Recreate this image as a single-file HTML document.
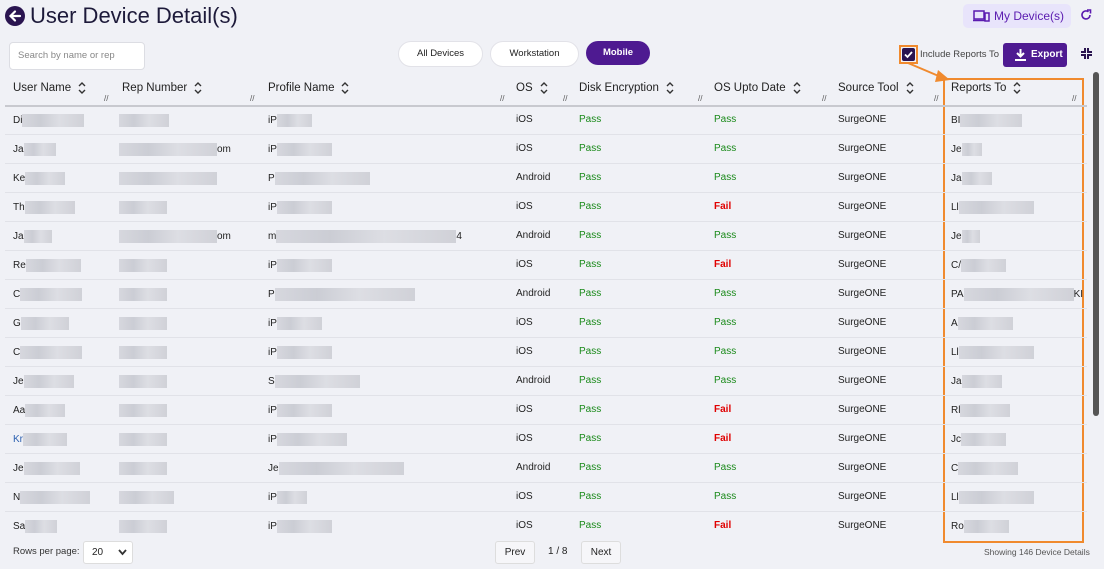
<!DOCTYPE html><html><head><meta charset="utf-8"><style>
body{margin:0;width:1104px;height:569px;background:#f0f1f6;font-family:"Liberation Sans",sans-serif;position:relative;overflow:hidden;color:#222}
.a{position:absolute}
.h{font-size:11.5px;color:#222}
.c{font-size:10px}
.b{display:inline-block;height:13px;vertical-align:middle;background:linear-gradient(90deg,#d0d1d8,#c2c4cc 30%,#d8d9df 60%,#c8c9d0);opacity:.8}
.p{color:#1a8a1a}.f{color:#e00000;font-weight:bold}
.sep{position:absolute;left:5px;width:1082px;height:1px;background:#e1e2e8}
.btn{position:absolute;border-radius:14px;font-size:9.5px;text-align:center;line-height:24px;height:24px}
.so{display:inline-block;width:10px;height:14px;vertical-align:middle;margin-left:6px}
.rh{position:absolute;top:94px;font-size:8px;color:#555}
</style></head><body>
<svg class="a" style="left:5px;top:6px" width="20" height="20" viewBox="0 0 20 20"><circle cx="10" cy="10" r="10" fill="#2a1450"/><path d="M15 10H6M10 5.5L5.5 10 10 14.5" stroke="#fff" stroke-width="2.2" fill="none" stroke-linecap="round"/></svg>
<div class="a" style="left:30px;top:3px;font-size:22px;color:#1d1a3a">User Device Detail(s)</div>
<div class="a" style="left:963px;top:4px;width:108px;height:24px;background:#e8e4fb;border-radius:5px;color:#5b1bb0;font-size:12px;line-height:24px"><svg style="position:absolute;left:10px;top:6px" width="17" height="12" viewBox="0 0 17 12"><rect x="1" y="1" width="10" height="8" fill="none" stroke="#5b1bb0" stroke-width="1.5"/><path d="M0 10.5h12" stroke="#5b1bb0" stroke-width="1.5"/><rect x="12" y="3" width="4" height="8" fill="none" stroke="#5b1bb0" stroke-width="1.5"/></svg><span style="position:absolute;left:31px">My Device(s)</span></div>
<svg class="a" style="left:1080px;top:9px" width="12" height="12" viewBox="0 0 12 12"><path d="M10 6A4 4 0 1 1 8.5 2.8" stroke="#5b1bb0" stroke-width="1.6" fill="none"/><path d="M7 1h3.5v3.5" stroke="#5b1bb0" stroke-width="1.6" fill="none"/></svg>
<div class="a" style="left:9px;top:42px;width:134px;height:26px;background:#fff;border:1px solid #dcdde3;border-radius:4px;font-size:9.5px;color:#888;line-height:26px;text-indent:8px">Search by name or rep</div>
<div class="btn" style="left:398px;top:41px;width:83px;background:#fff;border:1px solid #e2e2e8">All Devices</div>
<div class="btn" style="left:490px;top:41px;width:87px;background:#fff;border:1px solid #e2e2e8">Workstation</div>
<div class="btn" style="left:586px;top:41px;width:64px;background:#4e1a91;color:#fff;font-weight:bold;height:24px">Mobile</div>
<div class="a" style="left:899px;top:45px;width:19px;height:19px;border:2px solid #f08a2e;box-sizing:border-box"></div>
<div class="a" style="left:902px;top:48px;width:13px;height:13px;background:#2a1450;border-radius:2px"><svg width="13" height="13"><path d="M3 6.5l2.5 2.5 4.5-5" stroke="#fff" stroke-width="1.8" fill="none"/></svg></div>
<div class="a" style="left:920px;top:49px;font-size:9.5px;color:#444">Include Reports To</div>
<div class="a" style="left:1003px;top:43px;width:64px;height:24px;background:#4e1a91;border-radius:3px;color:#fff;font-size:10px;line-height:24px;font-weight:bold"><svg style="position:absolute;left:12px;top:6px" width="11" height="12"><path d="M5.5 0v7M2 4l3.5 3.5L9 4" stroke="#fff" stroke-width="2" fill="none"/><path d="M0 11h11" stroke="#fff" stroke-width="2"/></svg><span style="position:absolute;left:28px">Export</span></div>
<svg class="a" style="left:1081px;top:48px" width="11" height="11"><path d="M4 0v4H0M7 0v4h4M4 11V7H0M7 11V7h4" stroke="#2a1450" stroke-width="2" fill="none"/></svg>
<svg class="a" style="left:905px;top:60px" width="50" height="25"><path d="M3 3L36 17" stroke="#f08a2e" stroke-width="2"/><path d="M33 10L45 20 30 22Z" fill="#f08a2e"/></svg>
<div class="a" style="left:943px;top:78px;width:137px;height:461px;border:2px solid #f08a2e"></div>
<div class="a" style="left:1093px;top:72px;width:6px;height:344px;background:#555;border-radius:3px"></div>
<div class="a" style="left:5px;top:105px;width:1082px;height:2px;background:#c8c9cf"></div>
<div class="a h" style="left:13px;top:81px">User Name<svg class="so" viewBox="0 0 10 14"><path d="M2 5l3-3 3 3M2 9l3 3 3-3" stroke="#333" stroke-width="1.4" fill="none"/></svg></div>
<div class="a h" style="left:122px;top:81px">Rep Number<svg class="so" viewBox="0 0 10 14"><path d="M2 5l3-3 3 3M2 9l3 3 3-3" stroke="#333" stroke-width="1.4" fill="none"/></svg></div>
<div class="a h" style="left:268px;top:81px">Profile Name<svg class="so" viewBox="0 0 10 14"><path d="M2 5l3-3 3 3M2 9l3 3 3-3" stroke="#333" stroke-width="1.4" fill="none"/></svg></div>
<div class="a h" style="left:516px;top:81px">OS<svg class="so" viewBox="0 0 10 14"><path d="M2 5l3-3 3 3M2 9l3 3 3-3" stroke="#333" stroke-width="1.4" fill="none"/></svg></div>
<div class="a h" style="left:579px;top:81px">Disk Encryption<svg class="so" viewBox="0 0 10 14"><path d="M2 5l3-3 3 3M2 9l3 3 3-3" stroke="#333" stroke-width="1.4" fill="none"/></svg></div>
<div class="a h" style="left:714px;top:81px">OS Upto Date<svg class="so" viewBox="0 0 10 14"><path d="M2 5l3-3 3 3M2 9l3 3 3-3" stroke="#333" stroke-width="1.4" fill="none"/></svg></div>
<div class="a h" style="left:838px;top:81px">Source Tool<svg class="so" viewBox="0 0 10 14"><path d="M2 5l3-3 3 3M2 9l3 3 3-3" stroke="#333" stroke-width="1.4" fill="none"/></svg></div>
<div class="a h" style="left:951px;top:81px">Reports To<svg class="so" viewBox="0 0 10 14"><path d="M2 5l3-3 3 3M2 9l3 3 3-3" stroke="#333" stroke-width="1.4" fill="none"/></svg></div>
<div class="rh" style="left:104px">//</div><div class="rh" style="left:250px">//</div><div class="rh" style="left:500px">//</div><div class="rh" style="left:563px">//</div><div class="rh" style="left:698px">//</div><div class="rh" style="left:822px">//</div><div class="rh" style="left:934px">//</div><div class="rh" style="left:1072px">//</div>
<div class="a" style="left:13px;top:546px;font-size:9.5px;color:#333">Rows per page:</div>
<div class="a" style="left:83px;top:541px;width:48px;height:21px;background:#fff;border:1px solid #ddd;border-radius:3px;font-size:10px;line-height:21px;text-indent:8px">20 <svg style="position:absolute;left:34px;top:7px" width="9" height="7"><path d="M1 1l3.5 4L8 1" stroke="#333" stroke-width="1.8" fill="none"/></svg></div>
<div class="a" style="left:495px;top:541px;width:38px;height:21px;background:#f6f6f9;border:1px solid #ddd;border-radius:3px;font-size:10px;line-height:21px;text-align:center">Prev</div>
<div class="a" style="left:548px;top:546px;font-size:10px">1 / 8</div>
<div class="a" style="left:581px;top:541px;width:38px;height:21px;background:#f6f6f9;border:1px solid #ddd;border-radius:3px;font-size:10px;line-height:21px;text-align:center">Next</div>
<div class="a" style="left:984px;top:547px;font-size:8.5px;color:#555">Showing 146 Device Details</div>
<div class="sep" style="top:134px"></div><div class="sep" style="top:163px"></div><div class="sep" style="top:192px"></div><div class="sep" style="top:221px"></div><div class="sep" style="top:250px"></div><div class="sep" style="top:279px"></div><div class="sep" style="top:308px"></div><div class="sep" style="top:337px"></div><div class="sep" style="top:366px"></div><div class="sep" style="top:395px"></div><div class="sep" style="top:424px"></div><div class="sep" style="top:453px"></div><div class="sep" style="top:482px"></div><div class="sep" style="top:511px"></div>
<div class="a c" style="left:0;top:0">
<div class="a" style="top:114px;left:13px;white-space:nowrap">Di<span class="b" style="width:62px"></span></div><div class="a" style="top:114px;left:119px"><span class="b" style="width:50px"></span></div><div class="a" style="top:114px;left:268px;white-space:nowrap">iP<span class="b" style="width:35px"></span></div><div class="a" style="top:114px;left:516px">iOS</div><div class="a p" style="top:114px;left:579px">Pass</div><div class="a p" style="top:114px;left:714px">Pass</div><div class="a" style="top:114px;left:838px">SurgeONE</div><div class="a" style="top:114px;left:951px;white-space:nowrap">BI<span class="b" style="width:62px"></span></div>
<div class="a" style="top:143px;left:13px;white-space:nowrap">Ja<span class="b" style="width:32px"></span></div><div class="a" style="top:143px;left:119px;white-space:nowrap"><span class="b" style="width:98px"></span>om</div><div class="a" style="top:143px;left:268px;white-space:nowrap">iP<span class="b" style="width:55px"></span></div><div class="a" style="top:143px;left:516px">iOS</div><div class="a p" style="top:143px;left:579px">Pass</div><div class="a p" style="top:143px;left:714px">Pass</div><div class="a" style="top:143px;left:838px">SurgeONE</div><div class="a" style="top:143px;left:951px;white-space:nowrap">Je<span class="b" style="width:20px"></span></div>
<div class="a" style="top:172px;left:13px;white-space:nowrap">Ke<span class="b" style="width:40px"></span></div><div class="a" style="top:172px;left:119px"><span class="b" style="width:98px"></span></div><div class="a" style="top:172px;left:268px;white-space:nowrap">P<span class="b" style="width:95px"></span></div><div class="a" style="top:172px;left:516px">Android</div><div class="a p" style="top:172px;left:579px">Pass</div><div class="a p" style="top:172px;left:714px">Pass</div><div class="a" style="top:172px;left:838px">SurgeONE</div><div class="a" style="top:172px;left:951px;white-space:nowrap">Ja<span class="b" style="width:30px"></span></div>
<div class="a" style="top:201px;left:13px;white-space:nowrap">Th<span class="b" style="width:50px"></span></div><div class="a" style="top:201px;left:119px"><span class="b" style="width:48px"></span></div><div class="a" style="top:201px;left:268px;white-space:nowrap">iP<span class="b" style="width:55px"></span></div><div class="a" style="top:201px;left:516px">iOS</div><div class="a p" style="top:201px;left:579px">Pass</div><div class="a f" style="top:201px;left:714px">Fail</div><div class="a" style="top:201px;left:838px">SurgeONE</div><div class="a" style="top:201px;left:951px;white-space:nowrap">Ll<span class="b" style="width:75px"></span></div>
<div class="a" style="top:230px;left:13px;white-space:nowrap">Ja<span class="b" style="width:28px"></span></div><div class="a" style="top:230px;left:119px;white-space:nowrap"><span class="b" style="width:98px"></span>om</div><div class="a" style="top:230px;left:268px;white-space:nowrap">m<span class="b" style="width:180px"></span>4</div><div class="a" style="top:230px;left:516px">Android</div><div class="a p" style="top:230px;left:579px">Pass</div><div class="a p" style="top:230px;left:714px">Pass</div><div class="a" style="top:230px;left:838px">SurgeONE</div><div class="a" style="top:230px;left:951px;white-space:nowrap">Je<span class="b" style="width:18px"></span></div>
<div class="a" style="top:259px;left:13px;white-space:nowrap">Re<span class="b" style="width:55px"></span></div><div class="a" style="top:259px;left:119px"><span class="b" style="width:48px"></span></div><div class="a" style="top:259px;left:268px;white-space:nowrap">iP<span class="b" style="width:55px"></span></div><div class="a" style="top:259px;left:516px">iOS</div><div class="a p" style="top:259px;left:579px">Pass</div><div class="a f" style="top:259px;left:714px">Fail</div><div class="a" style="top:259px;left:838px">SurgeONE</div><div class="a" style="top:259px;left:951px;white-space:nowrap">C/<span class="b" style="width:45px"></span></div>
<div class="a" style="top:288px;left:13px;white-space:nowrap">C<span class="b" style="width:62px"></span></div><div class="a" style="top:288px;left:119px"><span class="b" style="width:48px"></span></div><div class="a" style="top:288px;left:268px;white-space:nowrap">P<span class="b" style="width:140px"></span></div><div class="a" style="top:288px;left:516px">Android</div><div class="a p" style="top:288px;left:579px">Pass</div><div class="a p" style="top:288px;left:714px">Pass</div><div class="a" style="top:288px;left:838px">SurgeONE</div><div class="a" style="top:288px;left:951px;white-space:nowrap">PA<span class="b" style="width:110px"></span>KI</div>
<div class="a" style="top:317px;left:13px;white-space:nowrap">G<span class="b" style="width:48px"></span></div><div class="a" style="top:317px;left:119px"><span class="b" style="width:48px"></span></div><div class="a" style="top:317px;left:268px;white-space:nowrap">iP<span class="b" style="width:45px"></span></div><div class="a" style="top:317px;left:516px">iOS</div><div class="a p" style="top:317px;left:579px">Pass</div><div class="a p" style="top:317px;left:714px">Pass</div><div class="a" style="top:317px;left:838px">SurgeONE</div><div class="a" style="top:317px;left:951px;white-space:nowrap">A<span class="b" style="width:55px"></span></div>
<div class="a" style="top:346px;left:13px;white-space:nowrap">C<span class="b" style="width:62px"></span></div><div class="a" style="top:346px;left:119px"><span class="b" style="width:48px"></span></div><div class="a" style="top:346px;left:268px;white-space:nowrap">iP<span class="b" style="width:55px"></span></div><div class="a" style="top:346px;left:516px">iOS</div><div class="a p" style="top:346px;left:579px">Pass</div><div class="a p" style="top:346px;left:714px">Pass</div><div class="a" style="top:346px;left:838px">SurgeONE</div><div class="a" style="top:346px;left:951px;white-space:nowrap">Ll<span class="b" style="width:75px"></span></div>
<div class="a" style="top:375px;left:13px;white-space:nowrap">Je<span class="b" style="width:50px"></span></div><div class="a" style="top:375px;left:119px"><span class="b" style="width:48px"></span></div><div class="a" style="top:375px;left:268px;white-space:nowrap">S<span class="b" style="width:85px"></span></div><div class="a" style="top:375px;left:516px">Android</div><div class="a p" style="top:375px;left:579px">Pass</div><div class="a p" style="top:375px;left:714px">Pass</div><div class="a" style="top:375px;left:838px">SurgeONE</div><div class="a" style="top:375px;left:951px;white-space:nowrap">Ja<span class="b" style="width:40px"></span></div>
<div class="a" style="top:404px;left:13px;white-space:nowrap">Aa<span class="b" style="width:40px"></span></div><div class="a" style="top:404px;left:119px"><span class="b" style="width:48px"></span></div><div class="a" style="top:404px;left:268px;white-space:nowrap">iP<span class="b" style="width:55px"></span></div><div class="a" style="top:404px;left:516px">iOS</div><div class="a p" style="top:404px;left:579px">Pass</div><div class="a f" style="top:404px;left:714px">Fail</div><div class="a" style="top:404px;left:838px">SurgeONE</div><div class="a" style="top:404px;left:951px;white-space:nowrap">Rl<span class="b" style="width:50px"></span></div>
<div class="a" style="top:433px;left:13px;white-space:nowrap;color:#2a5fb0">Kr<span class="b" style="width:44px"></span></div><div class="a" style="top:433px;left:119px"><span class="b" style="width:48px"></span></div><div class="a" style="top:433px;left:268px;white-space:nowrap">iP<span class="b" style="width:70px"></span></div><div class="a" style="top:433px;left:516px">iOS</div><div class="a p" style="top:433px;left:579px">Pass</div><div class="a f" style="top:433px;left:714px">Fail</div><div class="a" style="top:433px;left:838px">SurgeONE</div><div class="a" style="top:433px;left:951px;white-space:nowrap">Jc<span class="b" style="width:45px"></span></div>
<div class="a" style="top:462px;left:13px;white-space:nowrap">Je<span class="b" style="width:56px"></span></div><div class="a" style="top:462px;left:119px"><span class="b" style="width:48px"></span></div><div class="a" style="top:462px;left:268px;white-space:nowrap">Je<span class="b" style="width:125px"></span></div><div class="a" style="top:462px;left:516px">Android</div><div class="a p" style="top:462px;left:579px">Pass</div><div class="a p" style="top:462px;left:714px">Pass</div><div class="a" style="top:462px;left:838px">SurgeONE</div><div class="a" style="top:462px;left:951px;white-space:nowrap">C<span class="b" style="width:60px"></span></div>
<div class="a" style="top:491px;left:13px;white-space:nowrap">N<span class="b" style="width:70px"></span></div><div class="a" style="top:491px;left:119px"><span class="b" style="width:55px"></span></div><div class="a" style="top:491px;left:268px;white-space:nowrap">iP<span class="b" style="width:30px"></span></div><div class="a" style="top:491px;left:516px">iOS</div><div class="a p" style="top:491px;left:579px">Pass</div><div class="a p" style="top:491px;left:714px">Pass</div><div class="a" style="top:491px;left:838px">SurgeONE</div><div class="a" style="top:491px;left:951px;white-space:nowrap">Ll<span class="b" style="width:75px"></span></div>
<div class="a" style="top:520px;left:13px;white-space:nowrap">Sa<span class="b" style="width:32px"></span></div><div class="a" style="top:520px;left:119px"><span class="b" style="width:48px"></span></div><div class="a" style="top:520px;left:268px;white-space:nowrap">iP<span class="b" style="width:55px"></span></div><div class="a" style="top:520px;left:516px">iOS</div><div class="a p" style="top:520px;left:579px">Pass</div><div class="a f" style="top:520px;left:714px">Fail</div><div class="a" style="top:520px;left:838px">SurgeONE</div><div class="a" style="top:520px;left:951px;white-space:nowrap">Ro<span class="b" style="width:45px"></span></div>
</div>
</body></html>
